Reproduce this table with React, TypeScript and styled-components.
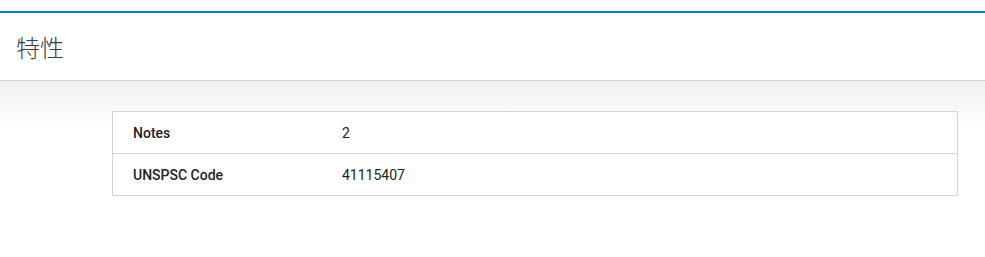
import * as React from 'react';
import styled, { createGlobalStyle } from 'styled-components';

const GlobalStyle = createGlobalStyle`
  html, body {
    margin: 0;
    padding: 0;
    background: #fff;
  }
  body {
    font-family: Roboto, "Noto Sans CJK SC", sans-serif;
    color: #222;
  }
`;

const rows = [
  { label: 'Notes', value: '2' },
  { label: 'UNSPSC Code', value: '41115407' },
];

export default function App() {
  return (
    <>
      <GlobalStyle />
      <Page>
        <Header>
          <Title>特性</Title>
        </Header>
        <Content>
          <SpecTable>
            <tbody>
              {rows.map((row) => (
                <Row key={row.label}>
                  <LabelCell>{row.label}</LabelCell>
                  <ValueCell>{row.value}</ValueCell>
                </Row>
              ))}
            </tbody>
          </SpecTable>
        </Content>
      </Page>
    </>
  );
}

const Page = styled.div`
  padding-top: 11px;
  height: 257px;
  box-sizing: border-box;
`;

const Header = styled.header`
  border-top: 2px solid #0a7fce;
  border-bottom: 1px solid #d2d2d2;
  height: 67px;
  display: flex;
  align-items: center;
  padding-left: 16px;
`;

const Title = styled.h2`
  margin: 0;
  font-family: "Noto Sans CJK SC", sans-serif;
  font-size: 24px;
  font-weight: 300;
  color: #3a3d44;
`;

const Content = styled.section`
  background: linear-gradient(to bottom, #eeeff0 0px, #ffffff 46px, #ffffff 100%);
  padding: 30px 27px 40px 112px;
`;

const SpecTable = styled.table`
  width: 100%;
  border-collapse: collapse;
  background: #fff;
  border: 1px solid #d3d3d3;
  font-size: 14px;
`;

const Row = styled.tr`
  height: 42px;
  border-bottom: 1px solid #d3d3d3;
`;

const LabelCell = styled.td`
  width: 189px;
  padding: 0 20px;
  font-weight: 500;
  color: #222;
`;

const ValueCell = styled.td`
  padding: 0;
  color: #222;
`;
